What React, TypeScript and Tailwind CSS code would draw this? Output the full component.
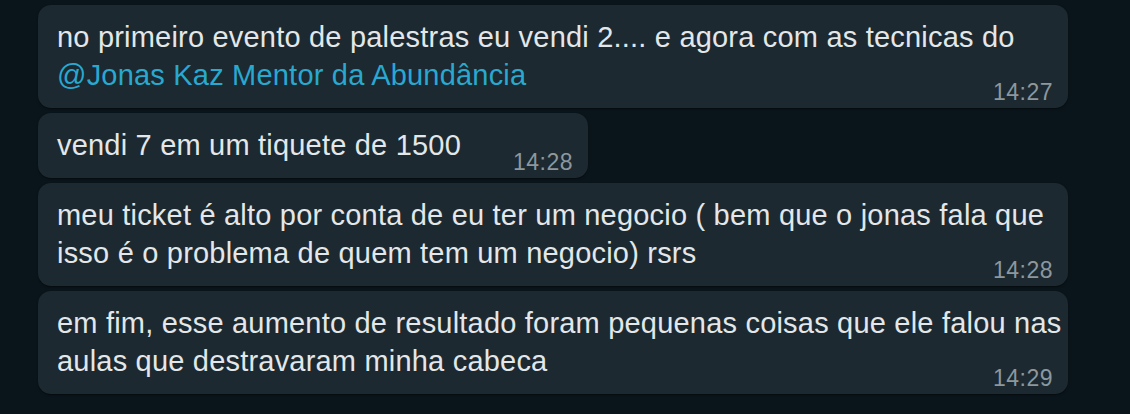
import React from 'react';

const text = 'text-[29px] leading-[38px] tracking-[0.2px] text-[#e3e7e9] whitespace-nowrap';
const time = 'text-[23px] leading-[22px] tracking-[0.5px] text-[#8c979e] text-right -mt-[13px]';

function Bubble({ children, stamp, wide = true }: { children: React.ReactNode; stamp: string; wide?: boolean }) {
  return (
    <div
      className={`${wide ? 'w-[1030px]' : 'w-fit'} rounded-[13px] bg-[#1c2930] pl-[19px] pr-[15px] pt-[13px] pb-[5px] shadow-[0_1px_2px_rgba(0,0,0,0.5)]`}
    >
      <div className={text}>{children}</div>
      <div className={time}>{stamp}</div>
    </div>
  );
}

export default function App() {
  return (
    <div
      className="w-[1130px] h-[414px] bg-[#0a151b] pl-[38px] pt-[5px] flex flex-col gap-[5px] overflow-hidden"
      style={{ fontFamily: '"Liberation Sans", Arial, sans-serif' }}
    >
      <Bubble stamp="14:27">
        no primeiro evento de palestras eu vendi 2.... e agora com as tecnicas do
        <br />
        <span className="text-[#29a8d0]">@Jonas Kaz Mentor da Abundância</span>
      </Bubble>

      <Bubble stamp="14:28" wide={false}>
        vendi 7 em um tiquete de 1500
        <span className="inline-block w-[112px]" />
      </Bubble>

      <Bubble stamp="14:28">
        meu ticket é alto por conta de eu ter um negocio ( bem que o jonas fala que
        <br />
        isso é o problema de quem tem um negocio) rsrs
      </Bubble>

      <Bubble stamp="14:29">
        em fim, esse aumento de resultado foram pequenas coisas que ele falou nas
        <br />
        aulas que destravaram minha cabeca
      </Bubble>
    </div>
  );
}
